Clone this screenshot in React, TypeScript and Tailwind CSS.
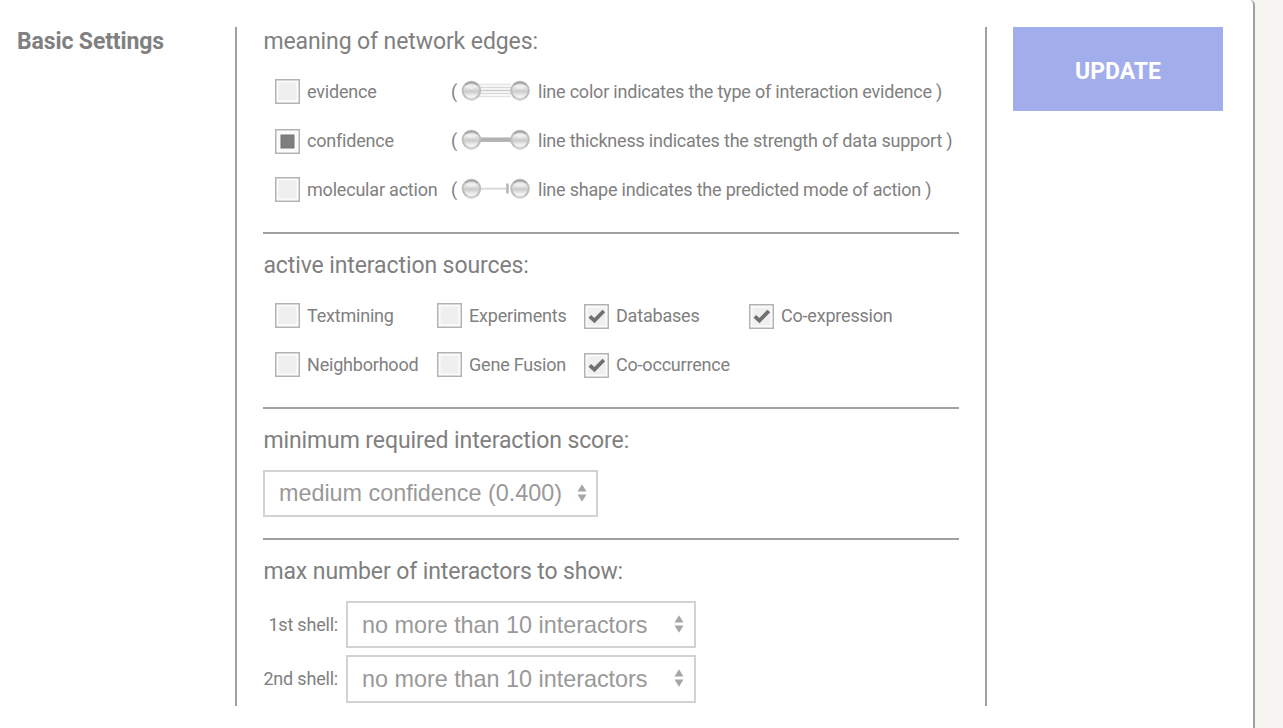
import React, { useId } from "react";

type BoxKind = "empty" | "radio" | "check";

function Box({ kind = "empty" }: { kind?: BoxKind }) {
  return (
    <svg width="25" height="25" viewBox="0 0 25 25" className={kind === "empty" ? "shrink-0" : "mt-px shrink-0"}>
      <rect x="0.75" y="0.75" width="23.5" height="23.5" fill="#fff" stroke="#b2b2b2" strokeWidth="1.5" />
      <rect x="2.5" y="2.5" width="20" height="20" fill={kind === "radio" ? "#fafafa" : "#f6f6f6"} />
      <rect x="4" y="4" width="17" height="17" fill={kind === "radio" ? "#fafafa" : "#efefef"} />
      {kind === "radio" && (
        <rect x="6" y="6" width="13" height="13" fill="#7e7e7e" stroke="#757575" />
      )}
      {kind === "check" && (
        <path d="M5.8 12.4 L10.4 16.6 L19.8 7" fill="none" stroke="#707070" strokeWidth="3.8" />
      )}
    </svg>
  );
}

function Edge({ kind }: { kind: string }) {
  const id = useId().replace(/[^a-zA-Z0-9]/g, "");
  return (
    <svg width="70" height="24" viewBox="0 0 70 24" className="shrink-0">
      <defs>
        <linearGradient id={id} x1="0" y1="0" x2="0" y2="1">
          <stop offset="0" stopColor="#b0b0b0" />
          <stop offset="0.25" stopColor="#e8e8e8" />
          <stop offset="0.46" stopColor="#d8d8d8" />
          <stop offset="0.54" stopColor="#cacaca" />
          <stop offset="0.8" stopColor="#f0f0f0" />
          <stop offset="1" stopColor="#f8f8f8" />
        </linearGradient>
      </defs>
      {kind === "evidence" && (
        <g strokeWidth="1.5">
          <path d="M19 4.5H51M19 16.5H51" stroke="#e4e4e4" />
          <path d="M19 7.5H51M19 13.5H51" stroke="#d8d8d8" />
          <path d="M19 10.5H51" stroke="#c8c8c8" />
        </g>
      )}
      {kind === "confidence" && <path d="M19 10.7H51" stroke="#b3b3b3" strokeWidth="4.5" />}
      {kind === "action" && (
        <g>
          <path d="M19 10.7H46" stroke="#dadada" strokeWidth="2" />
          <path d="M47.5 5.5V15.5" stroke="#b8b8b8" strokeWidth="2.6" />
        </g>
      )}
      {[11.4, 60].map((x) => (
        <g key={x}>
          <circle cx={x} cy="10.6" r="8.8" fill={`url(#${id})`} stroke="#bdbdbd" strokeWidth="2" />
          <path d={`M${x - 6} 4.9A8.3 8.3 0 0 1 ${x + 6} 4.9`} fill="none" stroke="#a4a4a4" strokeWidth="1.8" />
          <path d={`M${x - 5} 17.8A8.8 8.8 0 0 0 ${x + 5} 17.8`} fill="none" stroke="#d2d2d2" strokeWidth="2" />
          <ellipse cx={x} cy="6.6" rx="5" ry="2.4" fill="#fff" opacity="0.4" />
        </g>
      ))}
    </svg>
  );
}

function Heading({ children }: { children: React.ReactNode }) {
  return <h2 className="h-[28px] whitespace-nowrap pt-px pl-[0.4px] text-[23px] leading-[28px] tracking-[-0.1px]">{children}</h2>;
}

function Option({ label, kind }: { label: string; kind?: BoxKind }) {
  return (
    <div className="flex h-[25px] items-center gap-[7px] whitespace-nowrap tracking-[-0.2px]">
      <Box kind={kind} />
      <span>{label}</span>
    </div>
  );
}

function Select({ label, wide, tall }: { label: string; wide?: boolean; tall?: boolean }) {
  return (
    <button
      className={`flex items-center justify-between whitespace-nowrap border-2 border-[#d2d2d2] bg-white pl-[14px] font-['Liberation_Sans',sans-serif] text-[23.4px] leading-[28px] tracking-[-0.02px] text-[#999] ${
        wide ? "w-[350px] pr-[10px]" : "w-[335px] pr-[9px] pb-[2px]"
      } ${tall ? "h-[48px]" : "h-[47px]"}`}
    >
      <span>{label}</span>
      <svg width="10" height="18" viewBox="0 0 10 18" fill="#a6a6a6" className={wide ? "-mt-[2px]" : ""}>
        <path d="M5 0.3L9.5 7.4H.5ZM5 17.7L9.5 10.6H.5Z" />
      </svg>
    </button>
  );
}

const edges: { id: string; label: string; note: string; kind: BoxKind }[] = [
  { id: "evidence", label: "evidence", note: "line color indicates the type of interaction evidence )", kind: "empty" },
  { id: "confidence", label: "confidence", note: "line thickness indicates the strength of data support )", kind: "radio" },
  { id: "action", label: "molecular action", note: "line shape indicates the predicted mode of action )", kind: "empty" },
];

export default function App() {
  return (
    <div className="h-[728px] w-full overflow-hidden bg-[#f6f5f1] font-[Roboto,sans-serif] text-[#808080]">
      <main className="flex h-full w-[1255px] items-start rounded-tr-[5px] border-r-2 border-[#a0a0a0] bg-white pt-[27px]">
        <h1 className="w-[235px] pl-[17px] pt-px text-[23px] font-bold leading-[28px] tracking-[-0.12px]">Basic Settings</h1>
        <div className="h-[679px] w-[752px] border-x-2 border-[#a0a0a0] px-[26px] text-[18px] leading-[25px]">
          <section className="h-[207px] border-b-2 border-[#a0a0a0]">
            <Heading>meaning of network edges:</Heading>
            <div className="mt-[24px] flex flex-col gap-[24px] pl-[12px]">
              {edges.map((e) => (
                <div key={e.id} className="flex h-[25px] items-center">
                  <div className="w-[176px] shrink-0">
                    <Option label={e.label} kind={e.kind} />
                  </div>
                  <span className="w-[9px] shrink-0">(</span>
                  <Edge kind={e.id} />
                  <span className="ml-[8px] whitespace-nowrap tracking-[-0.21px]">{e.note}</span>
                </div>
              ))}
            </div>
          </section>
          <section className="h-[175px] border-b-2 border-[#a0a0a0] pt-[17px]">
            <Heading>active interaction sources:</Heading>
            <div className="mt-[24px] grid grid-cols-[162px_147px_165px_auto] gap-y-[24px] pl-[12px]">
              <Option label="Textmining" />
              <Option label="Experiments" />
              <Option label="Databases" kind="check" />
              <Option label="Co-expression" kind="check" />
              <Option label="Neighborhood" />
              <Option label="Gene Fusion" />
              <Option label="Co-occurrence" kind="check" />
            </div>
          </section>
          <section className="h-[131px] border-b-2 border-[#a0a0a0] pt-[17px]">
            <Heading>minimum required interaction score:</Heading>
            <div className="mt-[16px]">
              <Select label="medium confidence (0.400)" />
            </div>
          </section>
          <section className="pt-[17px]">
            <Heading>max number of interactors to show:</Heading>
            <div className="mt-[16px] flex flex-col gap-[7px]">
              {["1st shell:", "2nd shell:"].map((s, i) => (
                <div key={s} className="flex items-center">
                  <span className={`mr-[8px] w-[75px] whitespace-nowrap text-right tracking-[-0.2px] ${i === 1 ? "pb-[2px]" : ""}`}>{s}</span>
                  <Select wide tall={i === 1} label="no more than 10 interactors" />
                </div>
              ))}
            </div>
          </section>
        </div>
        <button className="ml-[26px] h-[84px] w-[210px] bg-[#a2adec] pt-[6px] text-[23px] font-bold text-white">UPDATE</button>
      </main>
    </div>
  );
}
